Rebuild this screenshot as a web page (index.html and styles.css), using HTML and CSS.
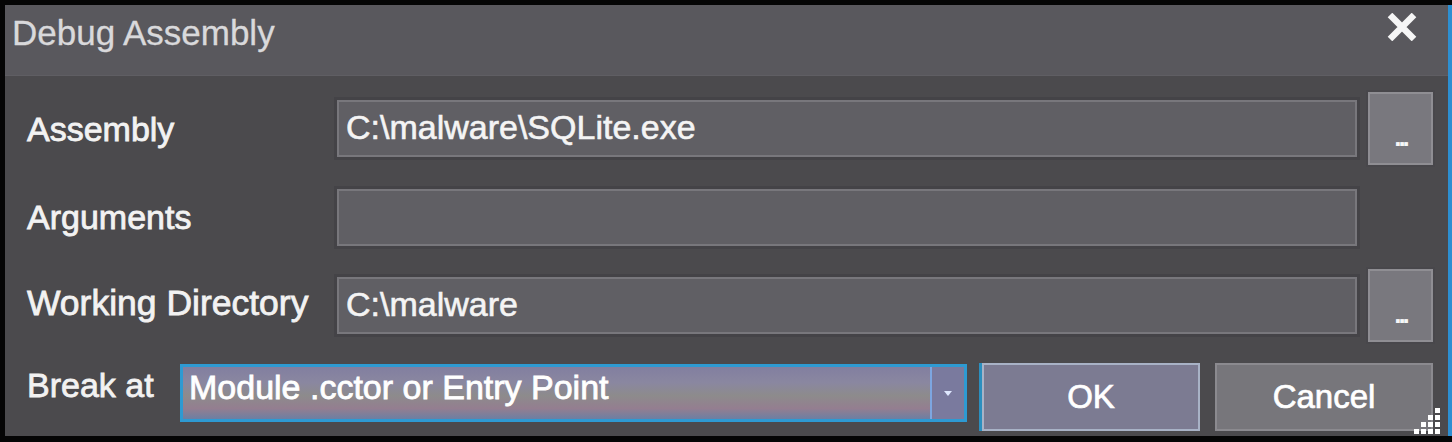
FILE: index.html
```html
<!DOCTYPE html>
<html>
<head>
<meta charset="utf-8">
<title>Debug Assembly</title>
<link rel="stylesheet" href="styles.css">
</head>
<body>
<div class="dialog">
  <div class="titlebar">
    <span class="title">Debug Assembly</span>
    <span class="close">
      <svg width="30" height="28" viewBox="0 0 30 28"><path d="M3 2 L27 26 M27 2 L3 26" stroke="#f6f6f6" stroke-width="6.5" stroke-linecap="butt"/></svg>
    </span>
  </div>
  <div class="content">
    <div class="label">Assembly</div>
    <div class="input">C:\malware\SQLite.exe</div>
    <div class="browse"><span>...</span></div>

    <div class="label">Arguments</div>
    <div class="input"></div>
    <div></div>

    <div class="label wide">Working Directory</div>
    <div class="input">C:\malware</div>
    <div class="browse"><span>...</span></div>

    <div class="lastrow">
      <div class="label short">Break at</div>
      <div class="combo">
        <span class="combo-text">Module .cctor or Entry Point</span>
        <span class="combo-arrow"><svg width="10" height="10" viewBox="0 0 10 10"><path d="M1 3 L9 3 L5 8 Z" fill="#dfe8ff"/></svg></span>
      </div>
      <div class="btn ok">OK</div>
      <div class="btn cancel">Cancel</div>
    </div>
  </div>
  <svg class="grip" width="32" height="30" viewBox="0 0 32 30">
    <rect x="24" y="2" width="5" height="5" fill="#ffffff"/>
    <rect x="17" y="9" width="5" height="5" fill="#ffffff"/>
    <rect x="24" y="9" width="5" height="5" fill="#ffffff"/>
    <rect x="10" y="16" width="5" height="5" fill="#ffffff"/>
    <rect x="17" y="16" width="5" height="5" fill="#ffffff"/>
    <rect x="24" y="16" width="5" height="5" fill="#ffffff"/>
    <rect x="3" y="23" width="5" height="5" fill="#ffffff"/>
    <rect x="10" y="23" width="5" height="5" fill="#ffffff"/>
    <rect x="17" y="23" width="5" height="5" fill="#ffffff"/>
    <rect x="24" y="23" width="5" height="5" fill="#ffffff"/>
  </svg>
</div>
</body>
</html>
```
FILE: styles.css
```css
html, body {
  margin: 0;
  padding: 0;
  background: #050505;
}
body {
  width: 1452px;
  height: 442px;
  overflow: hidden;
  font-family: "Liberation Sans", Arial, sans-serif;
}
.dialog {
  position: relative;
  margin: 5px 0 0 5px;
  width: 1443px;
  height: 431px;
  border-right: 4px solid #2c8fd2;
  background: #4b4a4d;
  display: flex;
  flex-direction: column;
}
.titlebar {
  height: 71px;
  flex: none;
  background: #59585d;
  border-bottom: 1px solid #5f5e63;
  box-sizing: border-box;
  display: flex;
  align-items: flex-start;
  justify-content: space-between;
  padding: 8px 31px 0 7px;
}
.title {
  font-size: 35px;
  line-height: 40px;
  color: #d9d9db;
  -webkit-text-stroke: 0.3px #d9d9db;
}
.close {
  display: flex;
  margin-top: 0;
}
.content {
  display: grid;
  grid-template-columns: 299px 1020px 65px;
  grid-template-rows: 89px 88px 89px 86px;
  column-gap: 11px;
  align-items: center;
  padding: 8px 15px 0 22px;
}
.label {
  font-size: 34px;
  line-height: 40px;
  color: #f2f2f2;
  -webkit-text-stroke: 0.8px #f2f2f2;
  white-space: nowrap;
}
.label.wide {
  font-size: 35.5px;
  margin-top: -6px;
}
.input {
  height: 57px;
  box-sizing: border-box;
  background: #605f64;
  border: 2px solid #78777c;
  box-shadow: 0 0 0 3px #444347;
  font-size: 34px;
  line-height: 50px;
  color: #f4f4f4;
  -webkit-text-stroke: 0.6px #f4f4f4;
  padding-left: 7px;
  white-space: nowrap;
}
.browse {
  height: 73px;
  box-sizing: border-box;
  background: #79787e;
  border: 2px solid #8f8e93;
  box-shadow: 0 0 0 2px #48474b;
  display: flex;
  justify-content: center;
  align-items: flex-end;
  padding-bottom: 20px;
}
.browse span {
  font-size: 26px;
  font-weight: bold;
  line-height: 12px;
  color: #f6f6f8;
  letter-spacing: -3px;
}
.lastrow {
  grid-column: 1 / -1;
  display: flex;
  align-items: center;
  align-self: stretch;
}
.label.short {
  width: 153px;
  flex: none;
  margin-top: -16px;
}
.combo {
  width: 787px;
  height: 58px;
  box-sizing: border-box;
  border: 3px solid #2e9ad2;
  background: linear-gradient(to bottom, #827fa0 0%, #8a87a0 30%, #8d8b8c 55%, #947e90 80%, #6c7fa3 100%);
  display: flex;
  align-items: center;
  justify-content: space-between;
  flex: none;
}
.combo-text {
  font-size: 34px;
  line-height: 40px;
  color: #ffffff;
  -webkit-text-stroke: 0.8px #ffffff;
  padding-left: 6px;
  margin-top: -12px;
  white-space: nowrap;
}
.combo-arrow {
  width: 34px;
  height: 52px;
  box-sizing: border-box;
  border-left: 2px solid #7da6e0;
  background: #7a7a9e;
  display: flex;
  align-items: center;
  justify-content: center;
}
.btn {
  width: 218px;
  height: 68px;
  box-sizing: border-box;
  flex: none;
  display: flex;
  align-items: center;
  justify-content: center;
  font-size: 33px;
  color: #ffffff;
  -webkit-text-stroke: 0.7px #ffffff;
  margin-top: 8px;
}
.ok {
  margin-left: 15px;
  background: #7c7b92;
  border: 2px solid #a8b2c6;
  box-shadow: -3px 0 0 #2b8fbf;
}
.cancel {
  margin-left: 15px;
  background: #77767b;
  border: 2px solid #8b8a8f;
}
.grip {
  position: absolute;
  right: 5px;
  bottom: 0;
}
```
